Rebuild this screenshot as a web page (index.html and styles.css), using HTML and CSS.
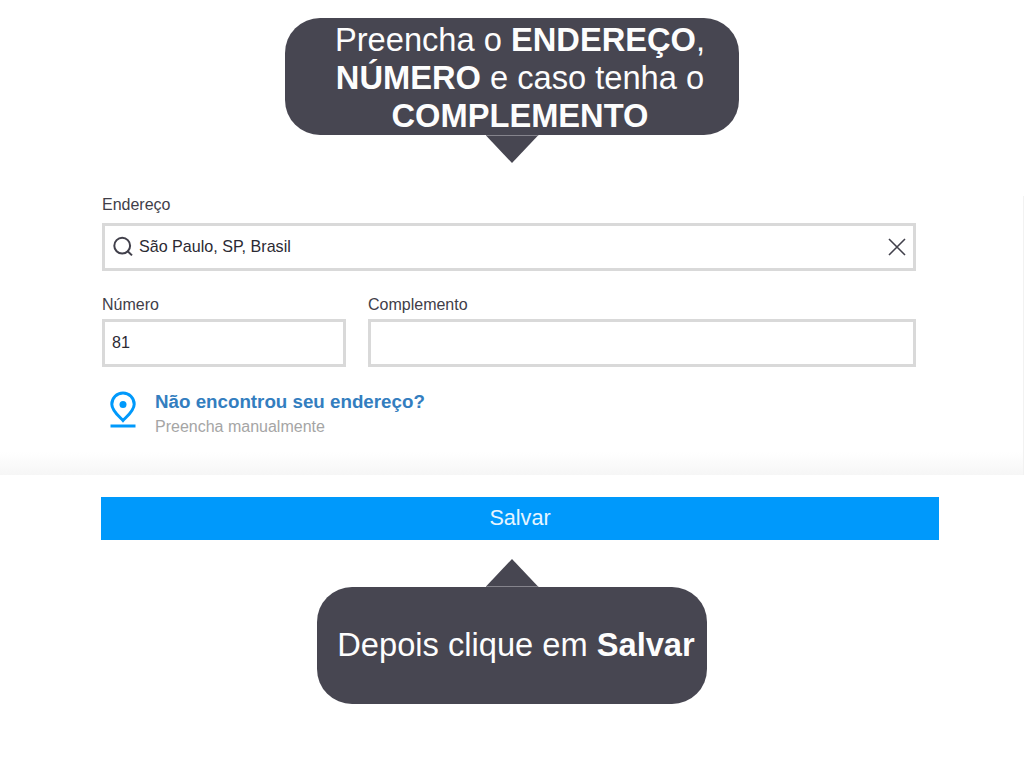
FILE: index.html
```html
<!DOCTYPE html>
<html lang="pt-BR">
<head>
    <meta charset="UTF-8">
    <meta name="viewport" content="width=device-width, initial-scale=1.0">
    <title>Preencha o endereço</title>
    <link rel="stylesheet" href="styles.css">
</head>
<body>
    <div class="callout callout-top">
        <p>Preencha o <b>ENDEREÇO</b>,<br><b>NÚMERO</b> e caso tenha o<br><b>COMPLEMENTO</b></p>
    </div>

    <form class="address-form">
        <div class="form-group">
            <label for="address">Endereço</label>
            <div class="field">
                <svg class="search-icon" width="22" height="22" viewBox="0 0 22 22">
                    <circle cx="9.2" cy="9.7" r="7.9"/>
                    <path d="M14.2 14.8L19 19.4"/>
                </svg>
                <input type="text" class="address-input" id="address" value="São Paulo, SP, Brasil">
                <svg class="clear-icon" width="18" height="18" viewBox="0 0 18 18">
                    <path d="M1 1L17 17M17 1L1 17"/>
                </svg>
            </div>
        </div>
        <div class="form-row">
            <div class="form-group number">
                <label for="number">Número</label>
                <div class="field">
                    <input type="text" id="number" value="81">
                </div>
            </div>
            <div class="form-group complement">
                <label for="complement">Complemento</label>
                <div class="field">
                    <input type="text" id="complement">
                </div>
            </div>
        </div>
        <div class="not-found">
            <svg class="pin-icon" width="28" height="38" viewBox="0 0 28 38">
                <path d="M14 30.5C10.5 26.8 2.8 20.8 2.8 14.2A11.2 11.2 0 0 1 25.2 14.2C25.2 20.8 17.5 26.8 14 30.5Z"/>
                <circle cx="14" cy="14.5" r="3.5"/>
                <path d="M1.5 36H26.5"/>
            </svg>
            <div>
                <a class="not-found-title">Não encontrou seu endereço?</a>
                <span class="not-found-text">Preencha manualmente</span>
            </div>
        </div>
    </form>

    <div class="footer">
        <button type="button">Salvar</button>
    </div>

    <div class="callout callout-bottom">
        <p>Depois clique em <b>Salvar</b></p>
    </div>
</body>
</html>
```
FILE: styles.css
```css
* {
    box-sizing: border-box;
}
body {
    font-family: "Liberation Sans", Arial, sans-serif;
    width: 1024px;
    height: 768px;
    margin: 0;
    padding-top: 18px;
    background-color: #fff;
    overflow: hidden;
}
.callout {
    position: relative;
    display: flex;
    justify-content: center;
    align-items: center;
    height: 117px;
    margin: 0 auto;
    border-radius: 35px;
    background-color: #474651;
    color: #fdfdfd;
    font-size: 32.65px;
    line-height: 38px;
    text-align: center;
    white-space: nowrap;
}
.callout p {
    margin: 0;
}
.callout::after {
    content: "";
    position: absolute;
    left: 50%;
    width: 53px;
    height: 27px;
    margin-left: -26.5px;
    background-color: #474651;
}
.callout-top {
    width: 454px;
    padding: 3px 0 0 16px;
}
.callout-top::after {
    top: 100%;
    border-top: 1px solid #85848c;
    clip-path: polygon(0 0, 100% 0, 50% 100%);
}
.callout-bottom {
    width: 390px;
    height: 116.5px;
    margin-top: 47px;
    padding-left: 8px;
}
.callout-bottom::after {
    bottom: 100%;
    border-bottom: 1px solid #85848c;
    clip-path: polygon(0 100%, 100% 100%, 50% 0);
}
.address-form {
    height: 279px;
    margin-top: 61px;
    padding: 0 107px 0 102px;
    border-right: 1px solid #f2f2f2;
    background: linear-gradient(to bottom, #fff 256px, #f6f6f6 279px);
}
label {
    display: block;
    height: 27px;
    color: #3f3e49;
    font-size: 16px;
    line-height: 17px;
}
.field {
    display: flex;
    align-items: center;
    height: 48px;
    padding: 0 7px;
    border: 3px solid #d9d9d9;
    background-color: #fff;
}
input {
    width: 100%;
    padding: 0 0 2px;
    border: none;
    outline: none;
    background: none;
    color: #2b2a33;
    font-family: inherit;
    font-size: 16.1px;
}
.address-input {
    margin-left: 5px;
}
.search-icon,
.clear-icon {
    flex-shrink: 0;
    overflow: visible;
    fill: none;
    stroke: #41404b;
    stroke-width: 2;
}
.search-icon {
    margin-left: 1px;
    margin-right: -1px;
}
.clear-icon {
    stroke-width: 1.6;
}
.form-row {
    display: flex;
    gap: 22px;
    margin-top: 25px;
}
.form-row label {
    height: 23px;
}
.number {
    width: 244px;
}
.complement {
    flex: 1;
}
.not-found {
    display: flex;
    margin-top: 23px;
    padding-left: 7px;
}
.pin-icon {
    margin-right: 18px;
    fill: none;
    stroke: #0099fb;
    stroke-width: 3;
}
.pin-icon circle {
    fill: #0099fb;
    stroke: none;
}
.not-found-title {
    display: block;
    color: #337ebf;
    font-size: 18.75px;
    font-weight: bold;
    line-height: 24px;
}
.not-found-text {
    display: block;
    color: #a5a5a5;
    font-size: 16px;
    line-height: 26px;
}
.footer {
    padding: 22px 85px 0 101px;
}
button {
    display: block;
    width: 100%;
    height: 43px;
    padding: 0 0 2px;
    border: none;
    background-color: #0099fb;
    color: #e6f5ff;
    font-family: inherit;
    font-size: 21.6px;
    cursor: pointer;
}
```
